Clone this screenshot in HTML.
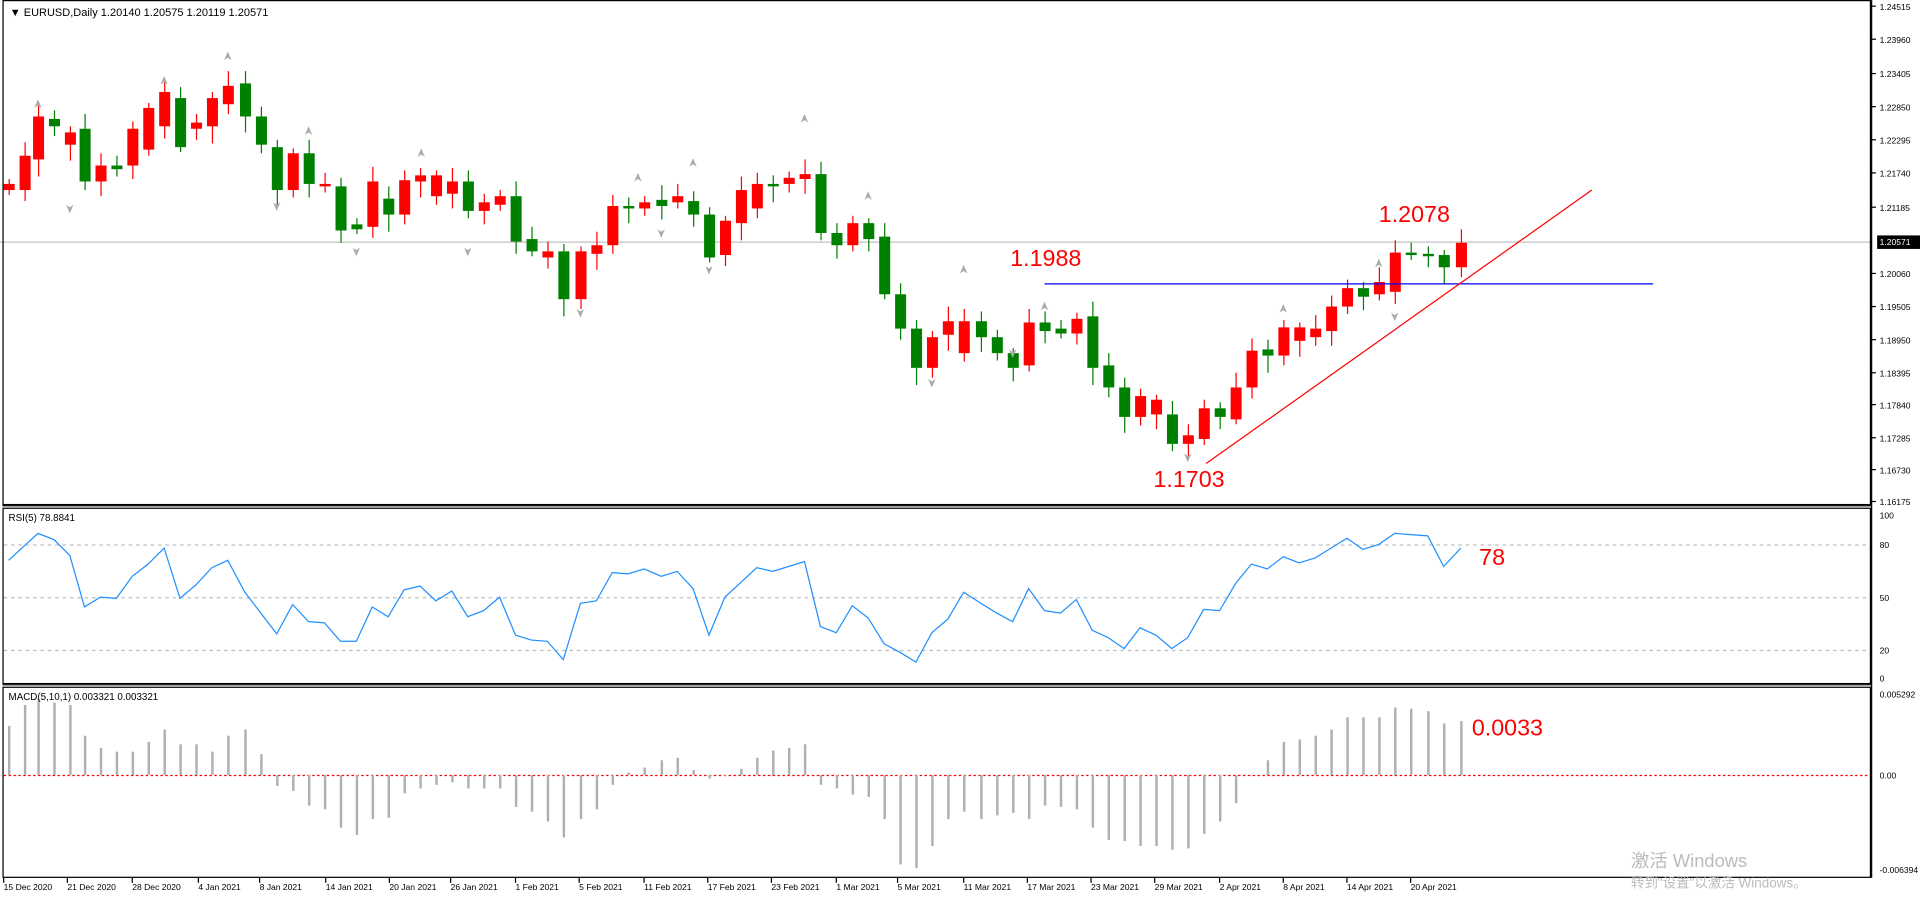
<!DOCTYPE html>
<html><head><meta charset="utf-8"><style>
html,body{margin:0;padding:0;background:#fff;overflow:hidden}
svg{display:block}
text{font-family:"Liberation Sans","Noto Sans CJK SC",sans-serif}
</style></head><body>
<svg id="s" width="1920" height="900" viewBox="0 0 1568 734" preserveAspectRatio="none" xmlns="http://www.w3.org/2000/svg">
<rect width="1568" height="734" fill="#fff"/>
<g id="g"></g>
<rect x="2.5" y="0.5" width="1525" height="411" fill="none" stroke="#000"/>
<line x1="2" y1="412.5" x2="1528" y2="412.5" stroke="#000"/>
<rect x="2.5" y="414.5" width="1525" height="143" fill="none" stroke="#000"/>
<line x1="2" y1="558.5" x2="1528" y2="558.5" stroke="#000"/>
<rect x="2.5" y="560.5" width="1525" height="155" fill="none" stroke="#000"/>
<line x1="1528.5" y1="0" x2="1528.5" y2="716" stroke="#000"/>
<text x="8" y="13" font-size="9">▼ EURUSD,Daily  1.20140 1.20575 1.20119 1.20571</text>
<text x="7" y="425" font-size="8">RSI(5) 78.8841</text>
<text x="7" y="571" font-size="8">MACD(5,10,1) 0.003321 0.003321</text>
<text x="825" y="217" font-size="19" fill="#f00">1.1988</text>
<text x="1126" y="181" font-size="19" fill="#f00">1.2078</text>
<text x="942" y="397" font-size="19" fill="#f00">1.1703</text>
<text x="1208" y="461" font-size="19" fill="#f00">78</text>
<text x="1202" y="600" font-size="19" fill="#f00">0.0033</text>
<text x="1332" y="707" font-size="15" fill="#bbb">激活 Windows</text>
<text x="1332" y="724" font-size="11" fill="#bbb">转到"设置"以激活 Windows。</text>
</svg>
<script>
var g=document.getElementById('g'),h='';
function L(x1,y1,x2,y2,c,w,d){h+='<line x1="'+x1+'" y1="'+y1+'" x2="'+x2+'" y2="'+y2+'" stroke="'+c+'" stroke-width="'+(w||1)+'"'+(d?' stroke-dasharray="'+d+'"':'')+'/>';}
function T(x,y,t,s,f,bg){if(bg)h+='<rect x="'+(x-2)+'" y="'+(y-8)+'" width="38" height="11" fill="#000"/>';h+='<text x="'+x+'" y="'+y+'" font-size="'+(s||7)+'" fill="'+(f||'#000')+'">'+t+'</text>';}
var C=[[7,150,155,'r'],[20,127,155,'r'],[31,95,130,'r'],[44,97,103,'g'],[57,108,118,'r'],[69,105,148,'g'],[82,135,148,'r'],[95,135,138,'g'],[108,105,135,'r'],[121,88,122,'r'],[134,75,103,'r'],[147,80,120,'g'],[160,100,105,'r'],[173,80,103,'r'],[186,70,85,'r'],[200,68,95,'g'],[213,95,118,'g'],[226,120,155,'g'],[239,125,155,'r'],[252,125,150,'g'],[265,150,152,'r'],[278,152,188,'g'],[291,183,187,'g'],[304,148,185,'r'],[317,162,175,'g'],[330,147,175,'r'],[343,143,148,'r'],[356,143,160,'r'],[369,148,158,'r'],[382,148,172,'g'],[395,165,172,'r'],[408,160,167,'r'],[421,160,197,'g'],[434,195,205,'g'],[447,205,210,'r'],[460,205,244,'g'],[474,205,244,'r'],[487,200,207,'r'],[500,168,200,'r'],[513,168,170,'g'],[526,165,170,'r'],[540,163,168,'g'],[553,160,165,'r'],[566,164,175,'g'],[579,175,210,'g'],[592,180,208,'r'],[605,155,182,'r'],[618,150,170,'r'],[631,150,152,'g'],[644,145,150,'r'],[657,142,146,'r'],[670,142,190,'g'],[683,190,200,'g'],[696,182,200,'r'],[709,182,195,'g'],[722,193,240,'g'],[735,240,268,'g'],[748,268,300,'g'],[761,275,300,'r'],[774,262,273,'r'],[787,262,288,'r'],[801,262,275,'g'],[814,275,288,'g'],[827,288,300,'g'],[840,263,298,'r'],[853,263,270,'g'],[866,268,272,'g'],[879,260,272,'r'],[892,258,300,'g'],[905,298,316,'g'],[918,316,340,'g'],[931,323,340,'r'],[944,326,338,'r'],[957,338,362,'g'],[970,355,362,'r'],[983,333,358,'r'],[996,333,340,'g'],[1009,316,342,'r'],[1022,286,316,'r'],[1035,285,290,'g'],[1048,267,290,'r'],[1061,267,278,'r'],[1074,268,275,'r'],[1087,250,270,'r'],[1100,235,250,'r'],[1113,235,242,'g'],[1126,230,240,'r'],[1139,206,238,'r'],[1152,206,208,'g'],[1166,207,209,'g'],[1179,208,218,'g'],[1193,198,218,'r']];
L(0,197.5,1528,197.5,'#c0c0c0');
[444.5,487.5,530.5].forEach(function(y){L(3,y,1528,y,'#c0c0c0',1,'3,3')});
L(3,632.5,1528,632.5,'#f00',1,'2,2');
C.forEach(function(c,i){
 var col=c[3]=='r'?'#f00':'#008000';
 var hi=c[1]-4-(i*7%9),lo=c[2]+4+(i*5%11);
 L(c[0]+.5,hi,c[0]+.5,lo,col);
 h+='<rect x="'+(c[0]-4)+'" y="'+c[1]+'" width="9" height="'+Math.max(2,c[2]-c[1])+'" fill="'+col+'"/>';
});
L(853,231.5,1350,231.5,'#00f');
L(985,378,1300,155,'#f00');
[[31,85],[134,66],[186,46],[252,107],[344,125],[521,145],[566,133],[657,97],[709,160],[787,220],[853,250],[1048,252],[1126,215]].forEach(function(p){h+='<path d="M'+(p[0]-3)+' '+(p[1]+3)+'L'+p[0]+' '+(p[1]-4)+'L'+(p[0]+3)+' '+(p[1]+3)+'L'+p[0]+' '+(p[1]+1)+'Z" fill="#aaa"/>'});
[[57,170],[226,168],[291,205],[382,205],[474,255],[540,190],[579,220],[761,312],[827,288],[970,373],[1139,258]].forEach(function(p){h+='<path d="M'+(p[0]-3)+' '+(p[1]-3)+'L'+p[0]+' '+(p[1]+4)+'L'+(p[0]+3)+' '+(p[1]-3)+'L'+p[0]+' '+(p[1]-1)+'Z" fill="#aaa"/>'});
var R=[457,445,435,440,453,495,487,488,470,460,447,488,477,463,457,483,500,517,493,507,508,523,523,495,503,481,478,490,482,503,498,487,518,522,523,538,492,490,467,468,464,470,466,480,518,487,475,463,466,462,458,511,516,494,504,525,532,540,516,505,483,492,500,507,480,498,500,489,514,520,529,512,518,529,520,497,498,476,460,464,454,459,455,447,439,448,444,435,436,437,462,447];
h+='<polyline points="'+C.map(function(c,i){return c[0]+','+R[i]}).join(' ')+'" fill="none" stroke="#1e90ff" stroke-width="1"/>';
var M=[592,575,570,573,575,600,610,613,613,605,595,607,607,613,600,595,615,641,645,657,660,675,681,668,667,647,643,640,638,643,643,643,658,662,670,683,668,660,640,630,626,620,618,628,635,633,627,618,612,610,607,640,643,648,650,668,705,708,690,668,662,668,665,663,668,657,658,660,675,685,686,690,690,693,692,680,670,655,632,620,605,603,600,595,585,585,585,577,578,580,590,588];
C.forEach(function(c,i){L(c[0]+.5,632,c[0]+.5,M[i],'#b0b0b0',2)});
[['1.24515',5],['1.23960',32],['1.23405',60],['1.22850',87],['1.22295',114],['1.21740',141],['1.21185',169],['1.20060',223],['1.19505',250],['1.18950',277],['1.18395',304],['1.17840',330],['1.17285',357],['1.16730',383],['1.16175',409]].forEach(function(a){L(1528,a[1],1532,a[1],'#000');T(1535,a[1]+3,a[0])});
T(1535,200,'1.20571',7,'#fff',1);
[['100',420],['80',444],['50',487],['20',530],['0',553]].forEach(function(a){T(1535,a[1]+3,a[0])});
[['0.005292',566],['0.00',632],['-0.006394',709]].forEach(function(a){T(1535,a[1]+3,a[0])});
[['15 Dec 2020',3],['21 Dec 2020',55],['28 Dec 2020',108],['4 Jan 2021',162],['8 Jan 2021',212],['14 Jan 2021',266],['20 Jan 2021',318],['26 Jan 2021',368],['1 Feb 2021',421],['5 Feb 2021',473],['11 Feb 2021',526],['17 Feb 2021',578],['23 Feb 2021',630],['1 Mar 2021',683],['5 Mar 2021',733],['11 Mar 2021',787],['17 Mar 2021',839],['23 Mar 2021',891],['29 Mar 2021',943],['2 Apr 2021',996],['8 Apr 2021',1048],['14 Apr 2021',1100],['20 Apr 2021',1152]].forEach(function(a){L(a[1],716,a[1],720,'#000');T(a[1],726,a[0])});
g.innerHTML=h;
</script>
</body></html>
